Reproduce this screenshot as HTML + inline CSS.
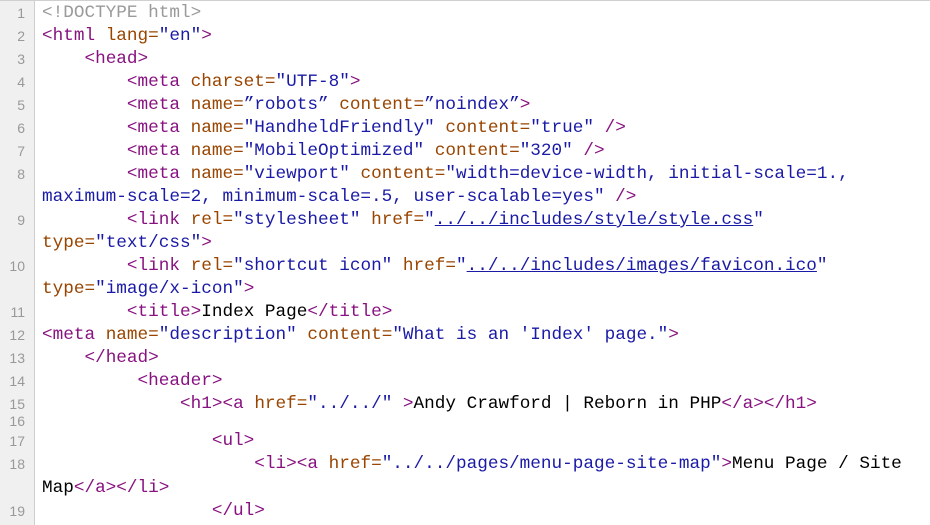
<!DOCTYPE html>
<html style="overflow:hidden;height:525px"><head><style>
body{margin:0;width:930px;height:525px;overflow:hidden;background:#fff;position:relative;border-top:1px solid #d0d0d0;box-sizing:border-box}
#g{position:absolute;left:0;top:0;width:34px;height:525px;background:#f0f0f0;border-right:1px solid #cfcfcf}
.r{position:absolute;left:0;height:23px;line-height:23px;white-space:pre;width:930px}
.n{position:absolute;left:0;width:25px;text-align:right;font:14px "Liberation Sans",sans-serif;color:#999;line-height:23px}
.c{position:absolute;left:42px;font:17.7px "Liberation Mono",monospace;color:#000;line-height:23px}
.t{color:#881280}.a{color:#994500}.v{color:#1a1aa6}.d{color:#9a9a9a}.u{text-decoration:underline}
</style></head><body><div id="g"></div>
<div class="r" style="top:1px"><span class="n">1</span><span class="c"><span class="d">&lt;!DOCTYPE html&gt;</span></span></div>
<div class="r" style="top:24px"><span class="n">2</span><span class="c"><span class="t">&lt;html </span><span class="a">lang=</span><span class="v">"en"</span><span class="t">&gt;</span></span></div>
<div class="r" style="top:47px"><span class="n">3</span><span class="c">    <span class="t">&lt;head&gt;</span></span></div>
<div class="r" style="top:70px"><span class="n">4</span><span class="c">        <span class="t">&lt;meta </span><span class="a">charset=</span><span class="v">"UTF-8"</span><span class="t">&gt;</span></span></div>
<div class="r" style="top:93px"><span class="n">5</span><span class="c">        <span class="t">&lt;meta </span><span class="a">name=</span><span class="v">”robots”</span> <span class="a">content=</span><span class="v">”noindex”</span><span class="t">&gt;</span></span></div>
<div class="r" style="top:116px"><span class="n">6</span><span class="c">        <span class="t">&lt;meta </span><span class="a">name=</span><span class="v">"HandheldFriendly"</span> <span class="a">content=</span><span class="v">"true"</span><span class="t"> /&gt;</span></span></div>
<div class="r" style="top:139px"><span class="n">7</span><span class="c">        <span class="t">&lt;meta </span><span class="a">name=</span><span class="v">"MobileOptimized"</span> <span class="a">content=</span><span class="v">"320"</span><span class="t"> /&gt;</span></span></div>
<div class="r" style="top:162px"><span class="n">8</span><span class="c">        <span class="t">&lt;meta </span><span class="a">name=</span><span class="v">"viewport"</span> <span class="a">content=</span><span class="v">"width=device-width, initial-scale=1.,</span></span></div>
<div class="r" style="top:185px"><span class="c"><span class="v">maximum-scale=2, minimum-scale=.5, user-scalable=yes"</span><span class="t"> /&gt;</span></span></div>
<div class="r" style="top:208px"><span class="n">9</span><span class="c">        <span class="t">&lt;link </span><span class="a">rel=</span><span class="v">"stylesheet"</span> <span class="a">href=</span><span class="v">"<span class="u">../../includes/style/style.css</span>"</span></span></div>
<div class="r" style="top:231px"><span class="c"><span class="a">type=</span><span class="v">"text/css"</span><span class="t">&gt;</span></span></div>
<div class="r" style="top:254px"><span class="n">10</span><span class="c">        <span class="t">&lt;link </span><span class="a">rel=</span><span class="v">"shortcut icon"</span> <span class="a">href=</span><span class="v">"<span class="u">../../includes/images/favicon.ico</span>"</span></span></div>
<div class="r" style="top:277px"><span class="c"><span class="a">type=</span><span class="v">"image/x-icon"</span><span class="t">&gt;</span></span></div>
<div class="r" style="top:300px"><span class="n">11</span><span class="c">        <span class="t">&lt;title&gt;</span>Index Page<span class="t">&lt;/title&gt;</span></span></div>
<div class="r" style="top:323px"><span class="n">12</span><span class="c"><span class="t">&lt;meta </span><span class="a">name=</span><span class="v">"description"</span> <span class="a">content=</span><span class="v">"What is an 'Index' page."</span><span class="t">&gt;</span></span></div>
<div class="r" style="top:346px"><span class="n">13</span><span class="c">    <span class="t">&lt;/head&gt;</span></span></div>
<div class="r" style="top:369px"><span class="n">14</span><span class="c">         <span class="t">&lt;header&gt;</span></span></div>
<div class="r" style="top:392px"><span class="n">15</span><span class="c">             <span class="t">&lt;h1&gt;&lt;a </span><span class="a">href=</span><span class="v">"../../"</span><span class="t"> &gt;</span>Andy Crawford | Reborn in PHP<span class="t">&lt;/a&gt;&lt;/h1&gt;</span></span></div>
<div class="r" style="top:409px"><span class="n">16</span></div>
<div class="r" style="top:429px"><span class="n">17</span><span class="c">                <span class="t">&lt;ul&gt;</span></span></div>
<div class="r" style="top:452px"><span class="n">18</span><span class="c">                    <span class="t">&lt;li&gt;&lt;a </span><span class="a">href=</span><span class="v">"../../pages/menu-page-site-map"</span><span class="t">&gt;</span>Menu Page / Site</span></div>
<div class="r" style="top:476px"><span class="c">Map<span class="t">&lt;/a&gt;&lt;/li&gt;</span></span></div>
<div class="r" style="top:499px"><span class="n">19</span><span class="c">                <span class="t">&lt;/ul&gt;</span></span></div>
</body></html>
